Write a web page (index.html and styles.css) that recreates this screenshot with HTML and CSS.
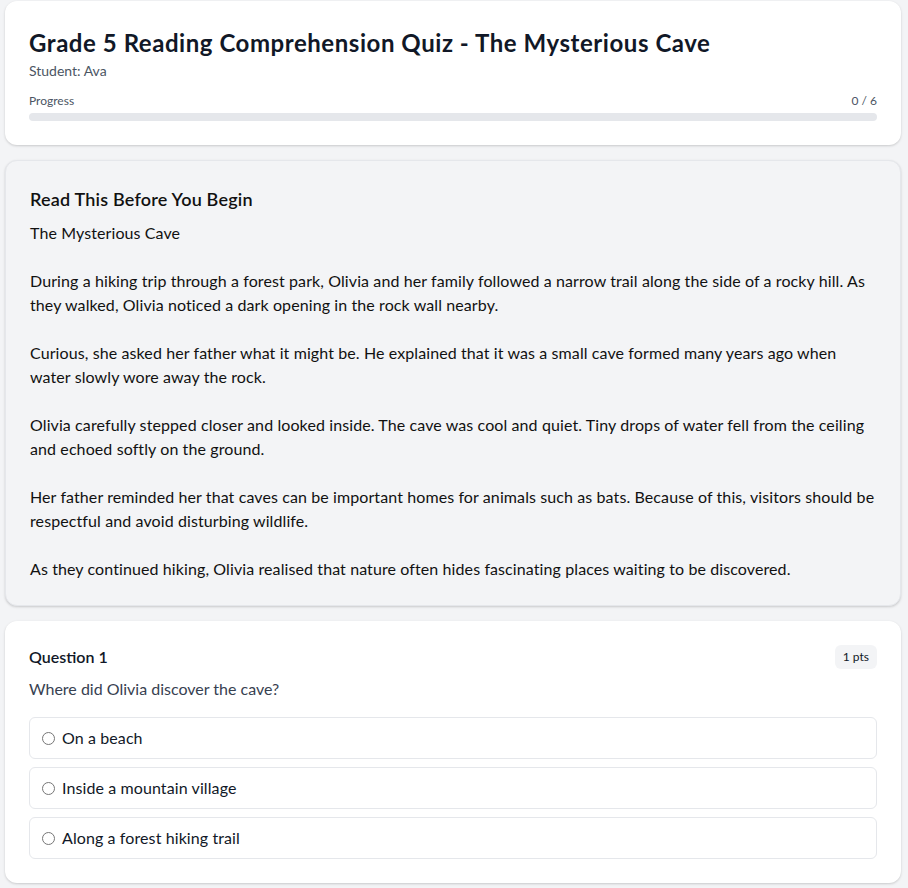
FILE: index.html
```html
<!DOCTYPE html>
<html lang="en">
<head>
<meta charset="utf-8">
<title>Grade 5 Reading Comprehension Quiz</title>
<link rel="stylesheet" href="styles.css">
</head>
<body>
<main class="page">
  <section class="card header-card">
    <h1 class="title">Grade 5 Reading Comprehension Quiz - The Mysterious Cave</h1>
    <div class="student">Student: Ava</div>
    <div class="progress">
      <div class="progress-row"><span>Progress</span><span>0 / 6</span></div>
      <div class="progress-track"><div class="progress-fill" style="width:0%"></div></div>
    </div>
  </section>

  <section class="card passage-card">
    <h2 class="passage-title">Read This Before You Begin</h2>
    <div class="passage">The Mysterious Cave

During a hiking trip through a forest park, Olivia and her family followed a narrow trail along the side of a rocky hill. As they walked, Olivia noticed a dark opening in the rock wall nearby.

Curious, she asked her father what it might be. He explained that it was a small cave formed many years ago when water slowly wore away the rock.

Olivia carefully stepped closer and looked inside. The cave was cool and quiet. Tiny drops of water fell from the ceiling and echoed softly on the ground.

Her father reminded her that caves can be important homes for animals such as bats. Because of this, visitors should be respectful and avoid disturbing wildlife.

As they continued hiking, Olivia realised that nature often hides fascinating places waiting to be discovered.</div>
  </section>

  <section class="card question-card">
    <div class="q-head">
      <span class="q-label">Question 1</span>
      <span class="pts">1 pts</span>
    </div>
    <p class="q-text">Where did Olivia discover the cave?</p>
    <div class="options">
      <label class="option"><input type="radio" name="q1"><span>On a beach</span></label>
      <label class="option"><input type="radio" name="q1"><span>Inside a mountain village</span></label>
      <label class="option"><input type="radio" name="q1"><span>Along a forest hiking trail</span></label>
    </div>
  </section>
</main>
</body>
</html>
```
FILE: styles.css
```css
* { box-sizing: border-box; }
html, body { margin: 0; }
body {
  background: #f3f4f6;
  font-family: "Segoe UI", Lato, "Noto Sans", sans-serif;
  color: #111827;
}
.page {
  display: flex;
  flex-direction: column;
  gap: 15px;
  padding: 1px 7px 8px 5px;
}
.card {
  background: #ffffff;
  border-radius: 12px;
  box-shadow: 0 1px 3px rgba(0,0,0,0.12), 0 1px 2px rgba(0,0,0,0.06);
  padding: 24px;
}
.title {
  margin: 0;
  font-size: 24px;
  line-height: 36px;
  font-weight: 700;
  letter-spacing: 0.55px;
  color: #111827;
}
.student {
  margin-top: 0;
  font-size: 14px;
  line-height: 20px;
  color: #4b5563;
}
.progress { margin-top: 12px; }
.progress-row {
  display: flex;
  justify-content: space-between;
  font-size: 12px;
  line-height: 16px;
  color: #4b5563;
}
.progress-track {
  margin-top: 4px;
  height: 8px;
  border-radius: 9999px;
  background: #e5e7eb;
  overflow: hidden;
}
.progress-fill { height: 100%; background: #2563eb; }

.passage-card {
  background: #f3f4f6;
  border: 1px solid #e5e7eb;
}
.passage-title {
  margin: 0;
  font-size: 18px;
  line-height: 28px;
  font-weight: 600;
  letter-spacing: 0.2px;
  color: #111111;
}
.passage {
  margin-top: 8px;
  font-size: 16px;
  line-height: 24px;
  letter-spacing: 0.1px;
  white-space: pre-wrap;
  color: #111111;
}

.q-head {
  display: flex;
  justify-content: space-between;
  align-items: center;
}
.q-label {
  font-size: 16px;
  line-height: 24px;
  font-weight: 600;
}
.pts {
  font-size: 12px;
  line-height: 16px;
  padding: 4px 8px;
  border-radius: 6px;
  background: #f3f4f6;
  color: #111827;
}
.q-text {
  margin: 8px 0 0;
  font-size: 16px;
  line-height: 24px;
  color: #374151;
}
.options {
  margin-top: 16px;
  display: flex;
  flex-direction: column;
  gap: 8px;
}
.option {
  display: flex;
  align-items: center;
  gap: 7px;
  padding: 8px 12px;
  border: 1px solid #e5e7eb;
  border-radius: 6px;
  font-size: 16px;
  line-height: 24px;
  letter-spacing: 0.1px;
  color: #111827;
}
.option input {
  margin: 0;
  width: 13px;
  height: 13px;
}
```
